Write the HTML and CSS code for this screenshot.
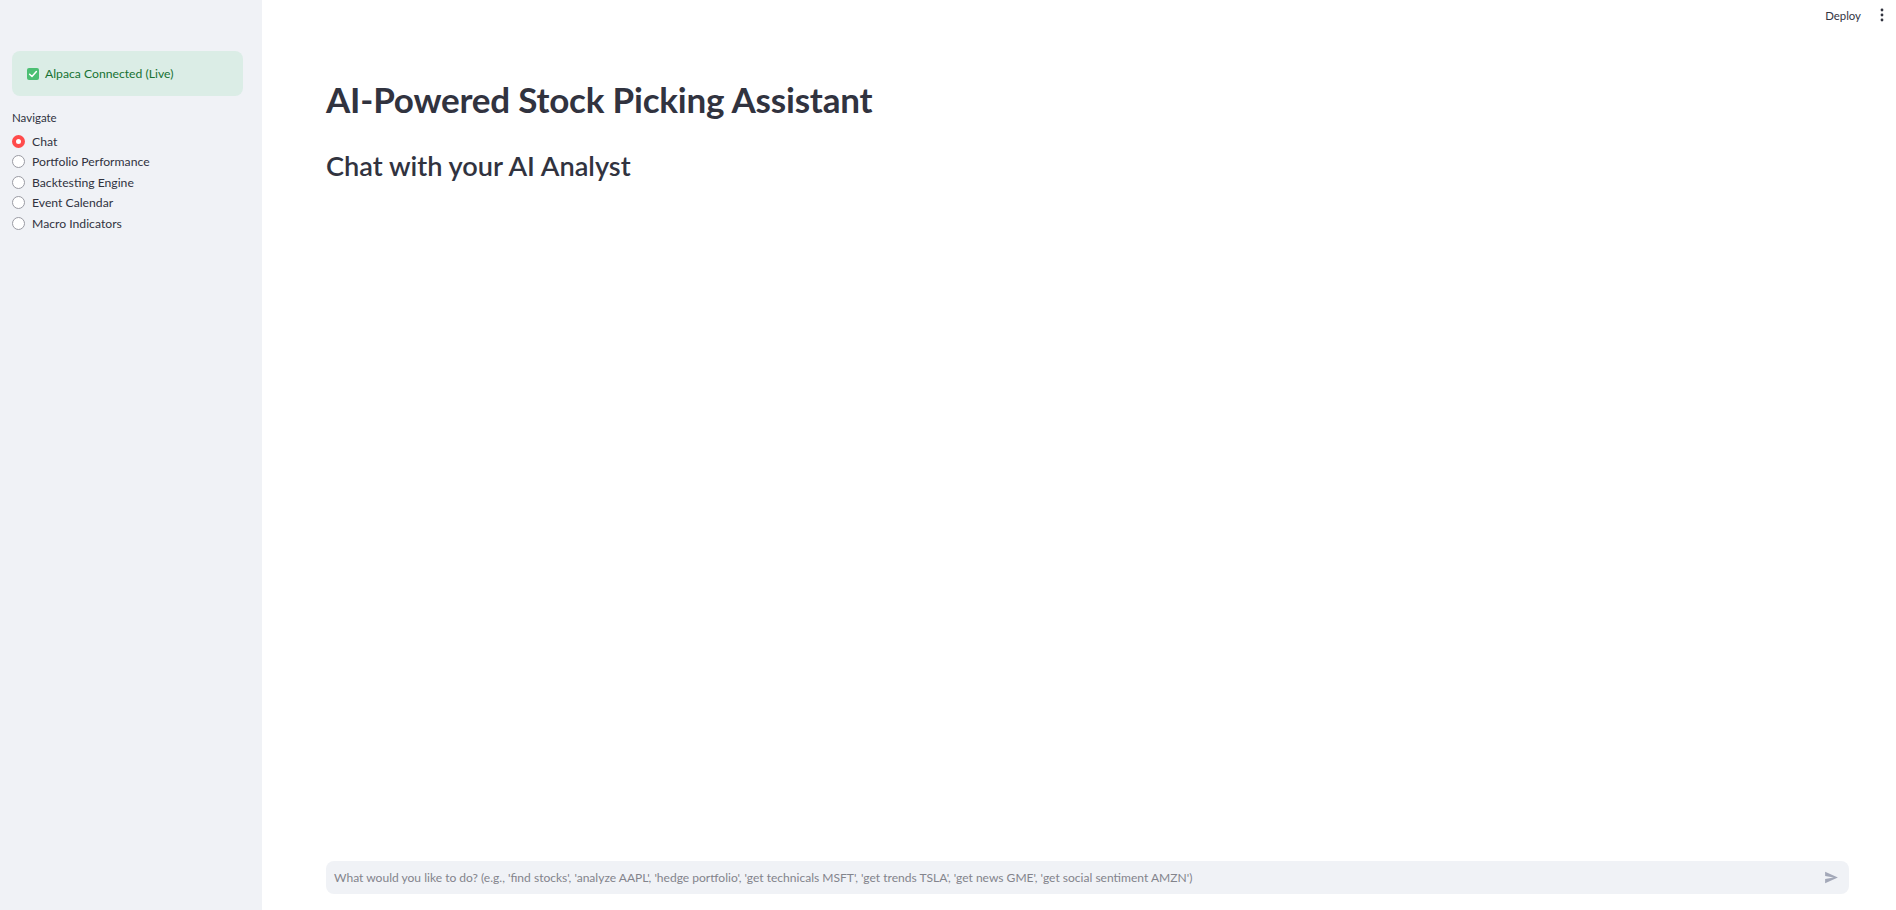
FILE: index.html
```html
<!DOCTYPE html>
<html lang="en">
<head>
<meta charset="utf-8">
<title>AI-Powered Stock Picking Assistant</title>
<link rel="stylesheet" href="styles.css">
</head>
<body>
<div class="app">
  <aside class="sidebar">
    <div class="alert">
      <svg class="check" viewBox="0 0 12 12" width="12" height="12"><rect x="0" y="0" width="12" height="12" rx="2" fill="#4cbf73"/><path d="M2.6 6.2 L5 8.5 L9.4 3.6" fill="none" stroke="#fff" stroke-width="1.5" stroke-linecap="round" stroke-linejoin="round"/></svg>
      <span>Alpaca Connected (Live)</span>
    </div>
    <div class="nav-label">Navigate</div>
    <ul class="radios">
      <li class="radio selected"><span class="dot"></span><span>Chat</span></li>
      <li class="radio"><span class="dot"></span><span>Portfolio Performance</span></li>
      <li class="radio"><span class="dot"></span><span>Backtesting Engine</span></li>
      <li class="radio"><span class="dot"></span><span>Event Calendar</span></li>
      <li class="radio"><span class="dot"></span><span>Macro Indicators</span></li>
    </ul>
  </aside>
  <main class="main">
    <header class="topbar">
      <span class="deploy">Deploy</span>
      <svg class="menu" viewBox="0 0 4 16" width="4" height="16"><circle cx="2" cy="3" r="1.4" fill="#31333f"/><circle cx="2" cy="8" r="1.4" fill="#31333f"/><circle cx="2" cy="13" r="1.4" fill="#31333f"/></svg>
    </header>
    <section class="content">
      <h1 class="title">AI-Powered Stock Picking Assistant</h1>
      <h2 class="subtitle">Chat with your AI Analyst</h2>
    </section>
    <footer class="chatbar">
      <div class="chat-input">
        <span class="placeholder">What would you like to do? (e.g., 'find stocks', 'analyze AAPL', 'hedge portfolio', 'get technicals MSFT', 'get trends TSLA', 'get news GME', 'get social sentiment AMZN')</span>
        <svg class="send" viewBox="0 0 24 24" width="17" height="17"><path d="M3 20 L21 12 L3 4 L3 10 L15 12 L3 14 Z" fill="#a3a8b8"/></svg>
      </div>
    </footer>
  </main>
</div>
</body>
</html>
```
FILE: styles.css
```css
* { box-sizing: border-box; }
html, body { margin: 0; padding: 0; height: 100%; }
body {
  font-family: Lato, "Source Sans Pro", "Noto Sans", sans-serif;
  color: #31333f;
  background: #ffffff;
}
.app {
  display: flex;
  width: 1896px;
  height: 910px;
}
.sidebar {
  width: 262px;
  flex: 0 0 262px;
  background: #f0f2f6;
  padding: 51px 19px 0 12px;
}
.alert {
  display: flex;
  align-items: center;
  gap: 6px;
  height: 45px;
  padding: 0 15px;
  background: #dbede6;
  border-radius: 8px;
  color: #177233;
  font-size: 12.2px;
}
.check { flex: 0 0 12px; }
.nav-label {
  margin-top: 15px;
  font-size: 11.5px;
  line-height: 14px;
}
.radios {
  list-style: none;
  margin: 6px 0 0;
  padding: 0;
}
.radio {
  display: flex;
  align-items: center;
  gap: 7px;
  height: 20.5px;
  font-size: 12.2px;
}
.dot {
  width: 13px;
  height: 13px;
  border-radius: 50%;
  border: 1px solid #9a9ba3;
  background: #fff;
  flex: 0 0 13px;
}
.radio.selected .dot {
  border: 4.3px solid #ff4b4b;
  background: #fff;
}
.main {
  flex: 1;
  display: flex;
  flex-direction: column;
  min-width: 0;
}
.topbar {
  height: 30px;
  display: flex;
  justify-content: flex-end;
  align-items: center;
  gap: 19px;
  padding: 0 12px 0 0;
}
.deploy {
  font-size: 11.4px;
  color: #31333f;
}
.menu { display: block; }
.content {
  flex: 1;
  padding: 0 47px 0 64px;
}
.title {
  margin: 47px 0 0;
  font-size: 35px;
  font-weight: 700;
  line-height: 44px;
  letter-spacing: -0.2px;
}
.subtitle {
  margin: 28px 0 0;
  font-size: 27.2px;
  font-weight: 600;
  line-height: 34px;
}
.chatbar {
  padding: 0 47px 16px 64px;
}
.chat-input {
  height: 33px;
  background: #f0f2f6;
  border-radius: 8px;
  display: flex;
  align-items: center;
  justify-content: space-between;
  padding: 0 9px 0 8px;
}
.placeholder {
  font-size: 12.05px;
  color: #83848c;
  white-space: nowrap;
}
.send { flex: 0 0 17px; }
```
